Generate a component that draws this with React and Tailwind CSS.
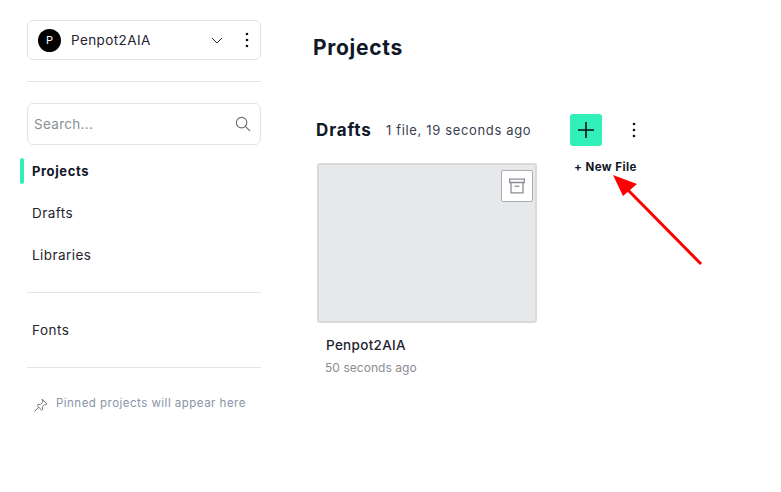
import React from "react";

const font = { fontFamily: '"Inter", "Noto Sans", sans-serif' };

function Kebab({ className }) {
  return (
    <svg className={className} width="4" height="16" viewBox="0 0 4 16" fill="#111">
      <circle cx="2" cy="2" r="1.3" />
      <circle cx="2" cy="8" r="1.3" />
      <circle cx="2" cy="14" r="1.3" />
    </svg>
  );
}

export default function App() {
  return (
    <div style={font} className="relative flex w-[781px] h-[492px] overflow-hidden bg-white text-[#111827] font-['Inter','Noto_Sans',sans-serif]">
      <aside className="w-[234px] ml-[27px] shrink-0 flex flex-col pt-[20px]">
        <div className="h-[40px] border border-[#e3e3e3] rounded-[6px] flex items-center pl-[10px] pr-[11px]">
          <div className="w-[23px] h-[23px] rounded-full bg-black text-white text-[11px] flex items-center justify-center">P</div>
          <span className="ml-[10px] text-[13.5px] tracking-[0.4px] text-[#1f2430]">Penpot2AIA</span>
          <svg className="ml-auto" width="12" height="7" viewBox="0 0 12 7" fill="none" stroke="#333" strokeWidth="1">
            <path d="M1 1l5 5 5-5" />
          </svg>
          <Kebab className="ml-[22px]" />
        </div>
        <div className="h-px bg-[#e3e3e3] mt-[21px]" />
        <div className="mt-[21px] h-[42px] border border-[#e3e3e3] rounded-[6px] flex items-center pl-[6px] pr-[9px]">
          <span className="text-[13.5px] tracking-[0.3px] text-[#8b8f96]">Search...</span>
          <svg className="ml-auto" width="16" height="16" viewBox="0 0 17 17" fill="none" stroke="#6b7075" strokeWidth="1.2">
            <circle cx="7" cy="7" r="5.6" />
            <path d="M11 11l5 5" />
          </svg>
        </div>
        <nav className="flex flex-col mt-[5px]">
          <div className="relative h-[42px] flex items-center pl-[5px] pt-[1px] text-[13px] tracking-[0.6px] font-bold text-[#111827]">
            <span className="absolute -left-[7px] top-[8px] w-[4px] h-[26px] rounded-[2px] bg-[#31efb8]" />
            Projects
          </div>
          <div className="h-[42px] flex items-center pl-[5px] text-[13.5px] tracking-[0.45px] text-[#1f2430]">Drafts</div>
          <div className="h-[42px] flex items-center pl-[5px] text-[13.5px] tracking-[0.45px] text-[#1f2430]">Libraries</div>
        </nav>
        <div className="h-px bg-[#e3e3e3] mt-[16px]" />
        <div className="h-[74px] flex items-center pl-[5px] text-[13.5px] tracking-[0.5px] text-[#1f2430]">Fonts</div>
        <div className="h-px bg-[#e3e3e3]" />
        <div className="flex items-center mt-[28px] pl-[6px] h-[16px]">
          <svg width="15" height="15" viewBox="0 0 14 14" fill="none" stroke="#6f7379" strokeWidth="0.9" className="mt-[3px]">
            <path d="M8.5 1l4.5 4.5-1 .7-1-.2-2.2 2.3.1 2.3-.9.9L3.8 6.8l.9-.9 2.3.1L9.2 3.8 9 2.8z" />
            <path d="M5.6 8.4L1.5 12.5" />
          </svg>
          <span className="ml-[8px] text-[11.5px] tracking-[0.48px] text-[#8a94a6]">Pinned projects will appear here</span>
        </div>
      </aside>

      <main className="flex-1 ml-[52px] min-w-0">
        <h1 className="mt-[35px] h-[26px] leading-[26px] text-[21px] tracking-[0.7px] font-bold text-[#111827]">Projects</h1>
        <div className="mt-[53px] ml-[3px] flex items-center h-[32px]">
          <h2 className="text-[17px] tracking-[0.85px] pt-[1px] font-bold w-[70px] whitespace-nowrap text-[#111827]">Drafts</h2>
          <span className="w-[145px] pt-[1px] text-[13px] tracking-[0.65px] whitespace-nowrap text-[#3a4150]">1 file, 19 seconds ago</span>
          <div className="ml-[39px] w-[32px] h-[32px] rounded-[3px] bg-[#31efb8] flex items-center justify-center">
            <svg width="16" height="16" viewBox="0 0 16 16" stroke="#111" strokeWidth="1.6" fill="none">
              <path d="M8 0v16M0 8h16" />
            </svg>
          </div>
          <Kebab className="ml-[30px]" />
        </div>
        <div className="mt-[17px] ml-[4px] w-[220px]">
          <div className="relative h-[160px] bg-[#e7e8ea] border-2 border-[#d9d9d9] rounded-[3px]">
            <div className="absolute top-[5px] right-[2px] w-[32px] h-[32px] bg-white border border-[#a9acb2] rounded-[2px] flex items-center justify-center">
              <svg width="16" height="16" viewBox="0 0 16 16" fill="none" stroke="#8a8d94" strokeWidth="1.3">
                <path d="M0.7 1.2h14.6v3.3H0.7z" />
                <path d="M2 4.5v10.3h12V4.5" />
                <path d="M5.7 8.2h4.6" />
              </svg>
            </div>
          </div>
          <div className="mt-[13px] ml-[9px] text-[13.5px] tracking-[0.3px] font-medium leading-[18px] text-[#1f2430]">Penpot2AIA</div>
          <div className="mt-[5px] ml-[8px] text-[12px] tracking-[0.05px] leading-[18px] text-[#8a8d94]">50 seconds ago</div>
        </div>
      </main>

      <span className="absolute left-[574px] top-[160px] text-[11.5px] tracking-[0.45px] font-bold leading-[14px] text-[#111827]">+ New File</span>
      <svg className="absolute left-[605px] top-[170px]" width="100" height="100" viewBox="605 170 100 100" fill="none">
        <path d="M701 264L628 190" stroke="#ff0000" strokeWidth="3" />
        <path d="M613 175L637 184L623 196Z" fill="#ff0000" />
      </svg>
    </div>
  );
}
